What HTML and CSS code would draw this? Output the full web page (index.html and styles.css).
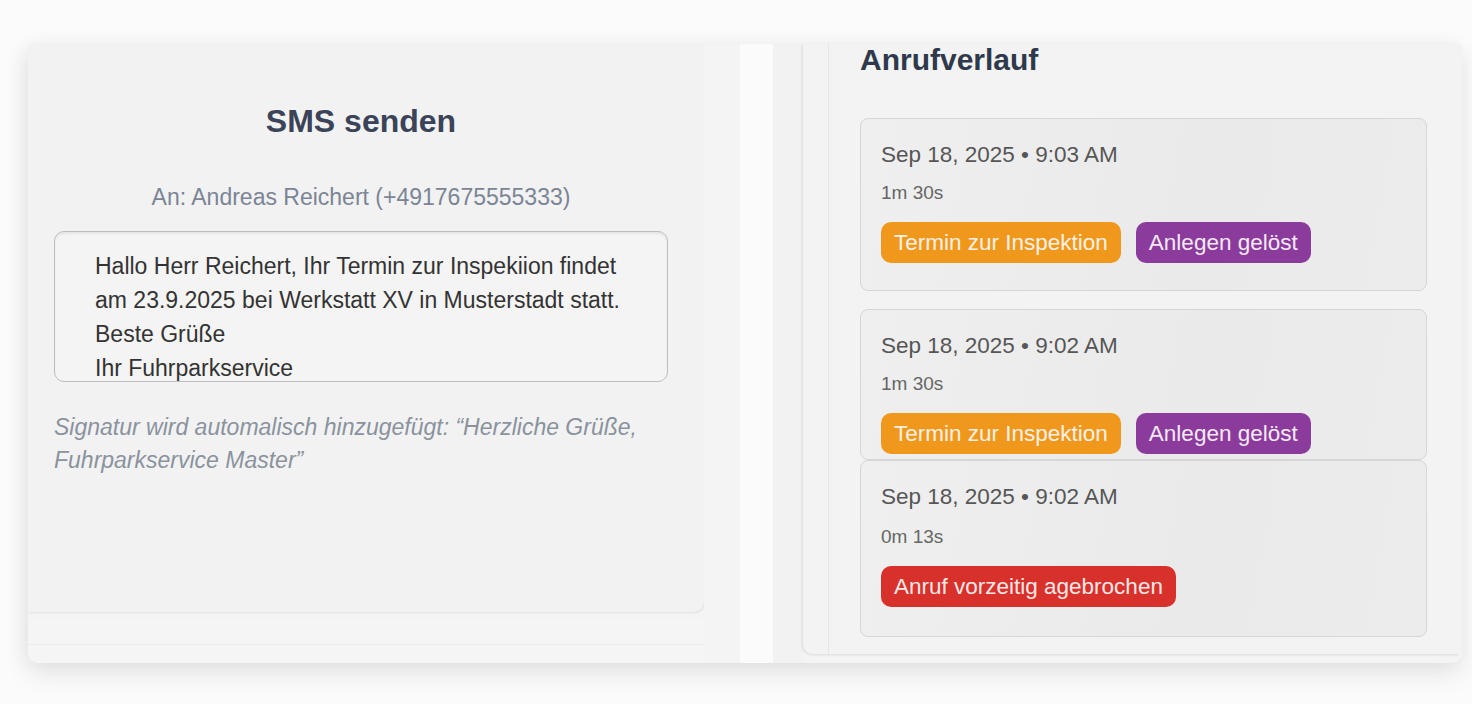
FILE: index.html
```html
<!DOCTYPE html>
<html lang="de">
<head>
<meta charset="utf-8">
<title>SMS senden / Anrufverlauf</title>
<link rel="stylesheet" href="styles.css">
</head>
<body>
<div class="frame">
  <div class="left-col">
    <section class="sms-card">
      <h2 class="sms-title">SMS senden</h2>
      <p class="sms-to">An: Andreas Reichert (+4917675555333)</p>
      <div class="sms-box">
        <p>Hallo Herr Reichert, Ihr Termin zur Inspekiion findet</p>
        <p>am 23.9.2025 bei Werkstatt XV in Musterstadt statt.</p>
        <p>Beste Grüße</p>
        <p>Ihr Fuhrparkservice</p>
      </div>
      <p class="sms-sig">Signatur wird automalisch hinzugefügt: “Herzliche Grüße, Fuhrparkservice Master”</p>
    </section>
    <section class="next-card"><div class="next-line"></div></section>
  </div>
  <div class="gutter">
    <div class="g1"></div>
    <div class="g2"></div>
    <div class="g3"></div>
  </div>
  <section class="calls">
    <div class="calls-inner">
      <h2 class="calls-title">Anrufverlauf</h2>
      <div class="call">
        <div class="call-date">Sep 18, 2025 • 9:03 AM</div>
        <div class="call-dur">1m 30s</div>
        <div class="tags">
          <span class="tag tag-orange">Termin zur Inspektion</span>
          <span class="tag tag-purple">Anlegen gelöst</span>
        </div>
      </div>
      <div class="call call-tight">
        <div class="call-date">Sep 18, 2025 • 9:02 AM</div>
        <div class="call-dur">1m 30s</div>
        <div class="tags">
          <span class="tag tag-orange">Termin zur Inspektion</span>
          <span class="tag tag-purple">Anlegen gelöst</span>
        </div>
      </div>
      <div class="call call-last">
        <div class="call-date">Sep 18, 2025 • 9:02 AM</div>
        <div class="call-dur call-dur-wide">0m 13s</div>
        <div class="tags">
          <span class="tag tag-red">Anruf vorzeitig agebrochen</span>
        </div>
      </div>
    </div>
  </section>
</div>
</body>
</html>
```
FILE: styles.css
```css
* { box-sizing: border-box; }
html, body { margin: 0; padding: 0; }
body {
  width: 1472px;
  height: 704px;
  overflow: hidden;
  background: #fbfbfb;
  font-family: "Liberation Sans", Arial, sans-serif;
  padding: 44px 0 0 28px;
}
p, h2 { margin: 0; }

.frame {
  width: 1434px;
  height: 619px;
  display: flex;
  background: #f4f4f4;
  border-radius: 0 0 10px 10px;
  box-shadow: 0 10px 26px rgba(0,0,0,0.10), -6px 0 20px rgba(0,0,0,0.03);
}

/* left column */
.left-col {
  width: 676px;
  display: flex;
  flex-direction: column;
}
.sms-card {
  height: 568px;
  background: #f2f2f2;
  border-radius: 0 0 10px 0;
  box-shadow: 1px 1px 2px rgba(0,0,0,0.08);
  padding: 58px 36px 0 26px;
  display: flex;
  flex-direction: column;
  align-items: stretch;
}
.sms-title {
  font-size: 32px;
  line-height: 38px;
  font-weight: 700;
  color: #3a4357;
  text-align: center;
}
.sms-to {
  margin-top: 44px;
  font-size: 23px;
  line-height: 26px;
  color: #7b8595;
  text-align: center;
}
.sms-box {
  margin-top: 21px;
  height: 151px;
  overflow: hidden;
  border: 1px solid #bdbdbd;
  border-radius: 10px;
  background: #f4f4f4;
  box-shadow: inset 0 2px 2px rgba(0,0,0,0.06);
  padding: 17px 20px 0 40px;
  font-size: 23px;
  line-height: 34px;
  color: #333333;
  white-space: nowrap;
}
.sms-sig {
  margin-top: 29px;
  font-size: 23px;
  line-height: 33px;
  font-style: italic;
  color: #8a929e;
  padding-right: 10px;
}
.next-card {
  flex: 1;
  margin-top: 7px;
  background: #f5f5f5;
  border-radius: 0 0 0 10px;
  padding-top: 25px;
}
.next-line {
  height: 1px;
  background: #ececec;
}

/* gutter */
.gutter {
  width: 99px;
  display: flex;
}
.g1 { width: 36px; background: #f4f4f4; }
.g2 { width: 33px; background: #fbfbfb; }
.g3 { width: 30px; background: #f2f2f2; }

/* right panel */
.calls {
  width: 657px;
  height: 610px;
  background: #f3f3f3;
  border-radius: 0 0 0 10px;
  box-shadow: -1px 1px 3px rgba(0,0,0,0.10);
  padding-left: 25px;
}
.calls-inner {
  height: 100%;
  border-left: 1px solid #e6e6e6;
  padding: 0 33px 0 31px;
}
.calls-title {
  font-size: 30px;
  line-height: 32px;
  font-weight: 700;
  color: #2f394c;
}
.call {
  margin-top: 42px;
  border: 1px solid #d6d6d6;
  border-radius: 8px;
  background: linear-gradient(100deg, #efefef 0%, #eaeaea 60%, #ececec 100%);
  padding: 23px 20px 27px;
}
.call + .call { margin-top: 18px; }
.call-tight { padding-bottom: 5px; }
.call-tight + .call-last { margin-top: 0; }
.call-last { padding-bottom: 29px; }
.call-date {
  font-size: 22.5px;
  line-height: 26px;
  color: #565656;
}
.call-dur {
  margin-top: 14px;
  font-size: 19px;
  line-height: 22px;
  color: #666666;
}
.call-dur-wide { margin-top: 16px; }
.tags {
  margin-top: 18px;
  display: flex;
  gap: 15px;
}
.tag {
  height: 41px;
  line-height: 41px;
  padding: 0 13px;
  border-radius: 10px;
  font-size: 22.5px;
  color: #fbf1e8;
  white-space: nowrap;
}
.tag-orange { background: #f0981c; }
.tag-purple { background: #8b3b9c; color: #f4e9f6; }
.tag-red { background: #d8302b; color: #fbe9e8; }
```
